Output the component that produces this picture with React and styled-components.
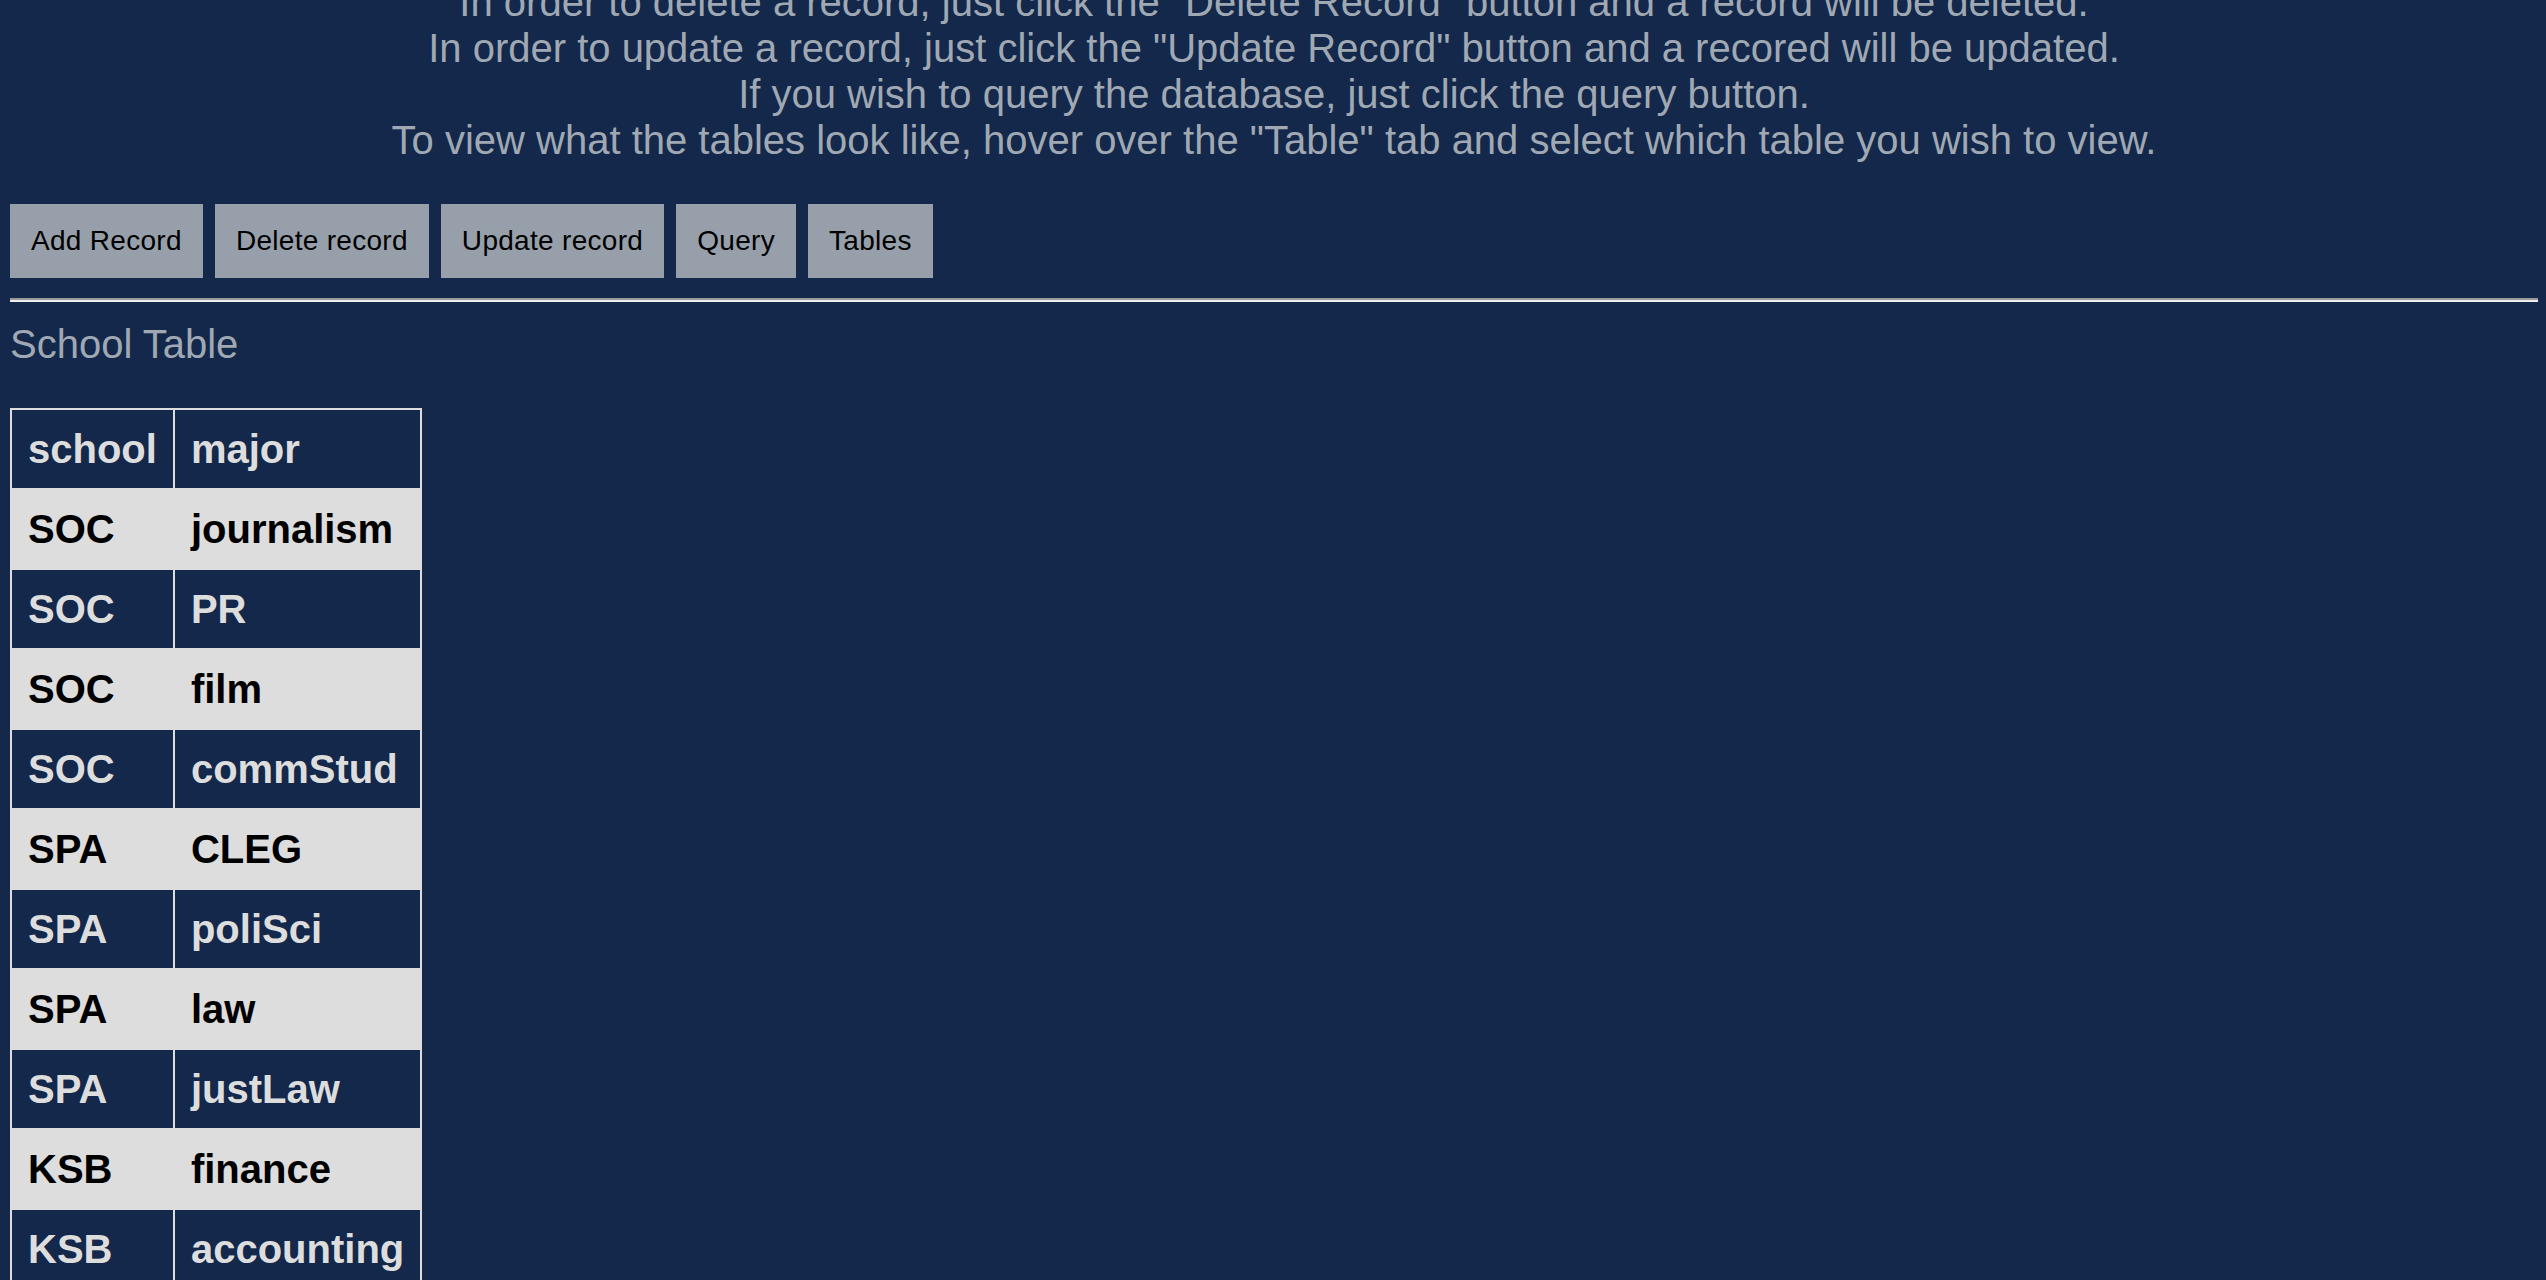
import React from 'react'
import styled, { createGlobalStyle } from 'styled-components'

const GlobalStyle = createGlobalStyle`
    html, body {
        margin: 0;
        padding: 0;
        overflow: hidden;
        background: #13284a;
        font-family: "Liberation Sans", Arial, Helvetica, sans-serif;
    }
`

const intro = [
    'In order to delete a record, just click the "Delete Record" button and a record will be deleted.',
    'In order to update a record, just click the "Update Record" button and a recored will be updated.',
    'If you wish to query the database, just click the query button.',
    'To view what the tables look like, hover over the "Table" tab and select which table you wish to view.',
]

const actions = ['Add Record', 'Delete record', 'Update record', 'Query', 'Tables']

const rows = [
    ['SOC', 'journalism'],
    ['SOC', 'PR'],
    ['SOC', 'film'],
    ['SOC', 'commStud'],
    ['SPA', 'CLEG'],
    ['SPA', 'poliSci'],
    ['SPA', 'law'],
    ['SPA', 'justLaw'],
    ['KSB', 'finance'],
    ['KSB', 'accounting'],
    ['KSB', 'marketing'],
]

const App = () => {
    return (
        <Page>
            <GlobalStyle />
            <Intro>
                {intro.map(line => (
                    <div key={line}>{line}</div>
                ))}
            </Intro>
            <Toolbar>
                {actions.map(a => (
                    <ActionButton key={a}>{a}</ActionButton>
                ))}
            </Toolbar>
            <Rule />
            <Title>School Table</Title>
            <DataTable>
                <tbody>
                    <tr>
                        <th>school</th>
                        <th>major</th>
                    </tr>
                    {rows.map(([school, major], i) => (
                        <tr key={i}>
                            <td>{school}</td>
                            <td>{major}</td>
                        </tr>
                    ))}
                </tbody>
            </DataTable>
        </Page>
    )
}

export default App

const Page = styled.div`
    padding: 0 8px 0 10px;
    color: #a0a8b3;
`

const Intro = styled.div`
    margin-top: -21px;
    text-align: center;
    font-size: 40px;
    line-height: 46px;
    color: #a0a8b3;
`

const Toolbar = styled.div`
    display: flex;
    gap: 12px;
    margin-top: 41px;
`

const ActionButton = styled.button`
    font-family: "Liberation Sans", Arial, Helvetica, sans-serif;
    font-size: 28px;
    line-height: 32px;
    letter-spacing: 0.3px;
    color: #000;
    background: #97a0aa;
    border: 1px solid #97a0aa;
    border-radius: 0;
    padding: 20px 20px 20px 20px;
    margin: 0;
`

const Rule = styled.hr`
    margin: 20px 0 0;
    height: 0;
    border: none;
    border-top: 2px solid #9a9a9a;
    border-bottom: 2px solid #eeeeee;
`

const Title = styled.div`
    margin-top: 19px;
    font-size: 40px;
    line-height: 46px;
    color: #a0a8b3;
`

const DataTable = styled.table`
    margin-top: 41px;
    background: #dddddd;
    border-spacing: 2px;
    font-size: 40px;
    font-weight: bold;

    th,
    td {
        padding: 16px;
        line-height: 46px;
        text-align: left;
        font-weight: bold;
    }

    tr:nth-child(odd) th,
    tr:nth-child(odd) td {
        background: #13284a;
        color: #dddddd;
    }

    tr:nth-child(even) td {
        background: #dddddd;
        color: #000;
    }
`
